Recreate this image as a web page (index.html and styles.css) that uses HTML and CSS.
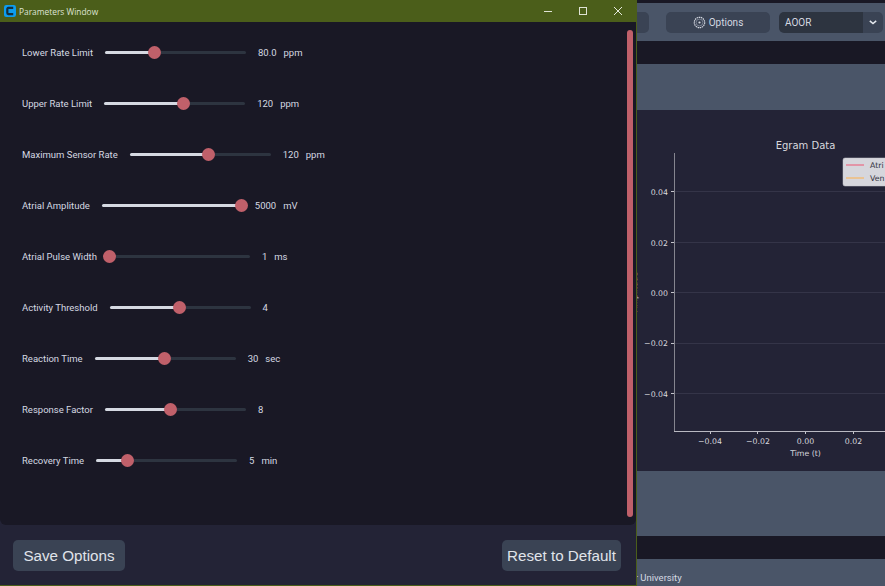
FILE: index.html
```html
<!DOCTYPE html>
<html lang="en">
<head>
    <meta charset="UTF-8">
    <meta name="viewport" content="width=device-width, initial-scale=1.0">
    <title>Parameters Window</title>
    <link rel="stylesheet" href="styles.css">
</head>
<body>
    <!-- main app, mostly covered by the parameters window -->
    <div class="app">
        <div class="app-top">
            <button class="app-btn app-btn-connect">Connect</button>
            <button class="app-btn app-btn-options">
                <svg class="gear" viewBox="0 0 13 13" width="13" height="13">
                    <circle cx="6.5" cy="6.5" r="5.2" fill="none" stroke="#d5d9e2" stroke-width="1.2" stroke-dasharray="1.5 0.6"/>
                    <circle cx="6.5" cy="6.5" r="3.4" fill="none" stroke="#8f97a6" stroke-width="0.7"/>
                    <circle cx="6.5" cy="6.5" r="1.1" fill="#d5d9e2"/>
                </svg>
                Options
            </button>
            <div class="mode-select">
                <span class="mode-value">AOOR</span>
                <span class="mode-arrow">
                    <svg viewBox="0 0 10 6" width="8" height="5">
                        <path d="M1 1l4 3.4L9 1" fill="none" stroke="#e6e9ef" stroke-width="1.8"/>
                    </svg>
                </span>
            </div>
        </div>
        <div class="app-gap"></div>
        <div class="app-band"></div>
        <div class="app-chart">
            <svg class="chart-svg" viewBox="0 110 885 361" width="885" height="361">
                <text class="chart-title" x="805.5" y="149" text-anchor="middle">Egram Data</text>
                <g class="chart-grid">
                    <line x1="674" x2="885" y1="191.5" y2="191.5"/>
                    <line x1="674" x2="885" y1="242.5" y2="242.5"/>
                    <line x1="674" x2="885" y1="292.5" y2="292.5"/>
                    <line x1="674" x2="885" y1="343.5" y2="343.5"/>
                    <line x1="674" x2="885" y1="393.5" y2="393.5"/>
                </g>
                <g class="chart-ticks">
                    <line x1="671" x2="674" y1="191.5" y2="191.5"/>
                    <line x1="671" x2="674" y1="242.5" y2="242.5"/>
                    <line x1="671" x2="674" y1="292.5" y2="292.5"/>
                    <line x1="671" x2="674" y1="343.5" y2="343.5"/>
                    <line x1="671" x2="674" y1="393.5" y2="393.5"/>
                    <line x1="710.5" x2="710.5" y1="431" y2="434"/>
                    <line x1="757.5" x2="757.5" y1="431" y2="434"/>
                    <line x1="805.5" x2="805.5" y1="431" y2="434"/>
                    <line x1="853.5" x2="853.5" y1="431" y2="434"/>
                </g>
                <line class="axis-left" x1="674.5" x2="674.5" y1="153" y2="431"/>
                <line class="axis-bottom" x1="674" x2="885" y1="431.5" y2="431.5"/>
                <g class="chart-label">
                    <text x="668" y="195" text-anchor="end">0.04</text>
                    <text x="668" y="245.5" text-anchor="end">0.02</text>
                    <text x="668" y="295.5" text-anchor="end">0.00</text>
                    <text x="668" y="346" text-anchor="end">−0.02</text>
                    <text x="668" y="396.5" text-anchor="end">−0.04</text>
                    <text x="710" y="443.5" text-anchor="middle">−0.04</text>
                    <text x="758" y="443.5" text-anchor="middle">−0.02</text>
                    <text x="805.5" y="443.5" text-anchor="middle">0.00</text>
                    <text x="853.5" y="443.5" text-anchor="middle">0.02</text>
                    <text x="805.5" y="455.5" text-anchor="middle">Time (t)</text>
                    <text x="0" y="0" text-anchor="middle" transform="translate(636.5 292) rotate(-90)">Amplitude</text>
                </g>
                <rect class="legend-box" x="843" y="158" width="60" height="28" rx="2"/>
                <line x1="846" x2="864" y1="165" y2="165" stroke="#e8718a" stroke-width="1.3"/>
                <line x1="846" x2="864" y1="178" y2="178" stroke="#f5b96b" stroke-width="1.3"/>
                <text class="legend-text" x="870" y="168">Atri</text>
                <text class="legend-text" x="870" y="180.5">Ven</text>
            </svg>
        </div>
        <div class="app-band app-band-low"></div>
        <div class="app-gap"></div>
        <div class="app-footer">McMaster University</div>
    </div>

    <!-- parameters window -->
    <div class="window">
        <div class="titlebar">
            <svg class="app-icon" viewBox="0 0 13 13" width="12" height="12">
                <rect width="13" height="13" rx="2.5" fill="#0d9df0"/>
                <path d="M10 3.2H4.6a1 1 0 0 0-1 1v4.6a1 1 0 0 0 1 1H10" fill="none" stroke="#14303f" stroke-width="2.4"/>
            </svg>
            <span class="window-title">Parameters Window</span>
            <div class="window-controls">
                <svg viewBox="0 0 10 10" width="10" height="10"><path d="M1 5.5h8" stroke="#dfe3d5" stroke-width="1"/></svg>
                <svg viewBox="0 0 10 10" width="10" height="10"><rect x="1.5" y="1.5" width="7" height="7" fill="none" stroke="#dfe3d5" stroke-width="1"/></svg>
                <svg viewBox="0 0 10 10" width="10" height="10"><path d="M1 1l8 8M9 1l-8 8" stroke="#e6e9dd" stroke-width="1"/></svg>
            </div>
        </div>
        <div class="params">
            <div class="param-list" id="param-list"></div>
            <div class="scrollbar"></div>
        </div>
        <div class="window-footer">
            <button class="footer-btn footer-btn-save">Save Options</button>
            <button class="footer-btn footer-btn-reset">Reset to Default</button>
        </div>
    </div>

    <script>
        const params = [
            { name: 'Lower Rate Limit', pos: 49, value: '80.0', unit: 'ppm' },
            { name: 'Upper Rate Limit', pos: 79, value: '120', unit: 'ppm' },
            { name: 'Maximum Sensor Rate', pos: 79, value: '120', unit: 'ppm' },
            { name: 'Atrial Amplitude', pos: 140, value: '5000', unit: 'mV' },
            { name: 'Atrial Pulse Width', pos: 1, value: '1', unit: 'ms' },
            { name: 'Activity Threshold', pos: 70, value: '4', unit: '' },
            { name: 'Reaction Time', pos: 70, value: '30', unit: 'sec' },
            { name: 'Response Factor', pos: 66, value: '8', unit: '' },
            { name: 'Recovery Time', pos: 31, value: '5', unit: 'min' },
        ];

        const list = document.getElementById('param-list');
        params.forEach(p => {
            const row = document.createElement('div');
            row.className = 'param-row';
            row.innerHTML = `
                <span class="param-name">${p.name}</span>
                <div class="slider">
                    <div class="slider-fill" style="width: ${p.pos}px"><span class="slider-thumb"></span></div>
                </div>
                <span class="param-value">${p.value}</span>
                <span class="param-unit">${p.unit}</span>`;
            list.appendChild(row);
        });
    </script>
</body>
</html>
```

FILE: styles.css
```css
html, body {
    margin: 0;
    padding: 0;
    height: 586px;
    overflow: hidden;
    background-color: #191825;
}
body {
    font-family: Roboto, "Liberation Sans", sans-serif;
}

/* main app behind the window */
.app {
    display: flex;
    flex-direction: column;
    height: 586px;
    padding-top: 3px;
    box-sizing: border-box;
}
.app-top {
    height: 38px;
    display: flex;
    align-items: center;
    justify-content: flex-end;
    gap: 9px;
    padding-right: 2px;
    background-color: #4a5568;
    box-sizing: border-box;
}
.app-btn {
    height: 21px;
    border: none;
    border-radius: 5px;
    background-color: #3a4354;
    color: #d5d9e2;
    font-family: Roboto, sans-serif;
    font-size: 10px;
    display: flex;
    align-items: center;
    justify-content: center;
    gap: 3px;
}
.app-btn-connect {
    width: 104px;
    margin-right: 8px;
}
.app-btn-options {
    width: 104px;
}
.mode-select {
    width: 104px;
    height: 21px;
    display: flex;
    border-radius: 5px;
    overflow: hidden;
    font-size: 10px;
    color: #d5d9e2;
}
.mode-value {
    width: 78px;
    padding-left: 6px;
    line-height: 21px;
    background-color: #2d3440;
}
.mode-arrow {
    flex: 1;
    display: flex;
    align-items: center;
    justify-content: center;
    background-color: #3a4354;
}
.app-gap {
    height: 23px;
    background-color: #191825;
}
.app-band {
    height: 46px;
    background-color: #4a5568;
}
.app-band-low {
    height: 65px;
}
.app-chart {
    height: 361px;
    background-color: #232336;
}
.chart-svg {
    display: block;
}
.chart-title {
    font-family: "DejaVu Sans", sans-serif;
    font-size: 10px;
    fill: #d8d8de;
}
.chart-grid line {
    stroke: #343448;
    stroke-width: 1;
}
.chart-ticks line {
    stroke: #c4c4cc;
    stroke-width: 1;
}
.axis-left {
    stroke: #85858f;
    stroke-width: 1;
}
.axis-bottom {
    stroke: #b9b9c2;
    stroke-width: 1;
}
.chart-label text {
    font-family: "DejaVu Sans", sans-serif;
    font-size: 7.8px;
    fill: #d8d8de;
}
.legend-box {
    fill: #d6d6dc;
    stroke: #c4c4cc;
    stroke-width: 0.5;
}
.legend-text {
    font-family: "DejaVu Sans", sans-serif;
    font-size: 7.8px;
    fill: #33333f;
}
.app-footer {
    flex: 1;
    display: flex;
    align-items: center;
    padding-left: 595px;
    padding-top: 10px;
    box-sizing: border-box;
    background-color: #4a5568;
    color: #d5d9e2;
    font-size: 9.5px;
}

/* parameters window */
.window {
    position: absolute;
    top: 0;
    left: 0;
    width: 637px;
    height: 586px;
    display: flex;
    flex-direction: column;
    box-sizing: border-box;
    border-right: 1px solid #4b5e1a;
    border-bottom: 1px solid #4b5e1a;
    background-color: #232336;
}
.titlebar {
    height: 22px;
    flex-shrink: 0;
    display: flex;
    align-items: center;
    padding-left: 4px;
    background-color: #4b5e1a;
}
.app-icon {
    margin-right: 3px;
}
.window-title {
    font-family: "Open Sans", "Noto Sans", sans-serif;
    font-size: 8.4px;
    color: #dfe3d5;
}
.window-controls {
    margin-left: auto;
    display: flex;
    gap: 25px;
    padding-right: 13px;
}
.params {
    height: 503px;
    flex-shrink: 0;
    display: flex;
    background-color: #191825;
    border-radius: 0 0 6px 6px;
}
.param-list {
    flex: 1;
    display: flex;
    flex-direction: column;
    padding-top: 5px;
    padding-left: 22px;
}
.param-row {
    height: 51px;
    flex-shrink: 0;
    display: flex;
    align-items: center;
    font-size: 9.5px;
    color: #d5d9e2;
}
.param-name {
    margin-right: 12px;
}
.slider {
    width: 141px;
    height: 3px;
    flex-shrink: 0;
    background-color: #2d3440;
    border-radius: 2px;
}
.slider-fill {
    position: relative;
    height: 3px;
    background-color: #d5d9e2;
    border-radius: 2px;
}
.slider-thumb {
    position: absolute;
    right: -6.5px;
    top: -5px;
    width: 13px;
    height: 13px;
    border-radius: 50%;
    background-color: #c0606a;
}
.param-value {
    margin-left: 12px;
}
.param-unit {
    margin-left: 7px;
}
.scrollbar {
    width: 6px;
    height: 487px;
    margin: 8px 3px 0 0;
    border-radius: 3px;
    background-color: #c0606a;
}
.window-footer {
    flex: 1;
    display: flex;
    align-items: flex-start;
    justify-content: space-between;
    padding: 15px 15px 0 13px;
}
.footer-btn {
    height: 31px;
    padding: 0;
    border: none;
    border-radius: 5px;
    background-color: #3a4354;
    color: #e0e4ea;
    font-family: "Liberation Sans", Arial, sans-serif;
    font-size: 15.2px;
}
.footer-btn-save {
    width: 112px;
}
.footer-btn-reset {
    width: 119px;
}
```
